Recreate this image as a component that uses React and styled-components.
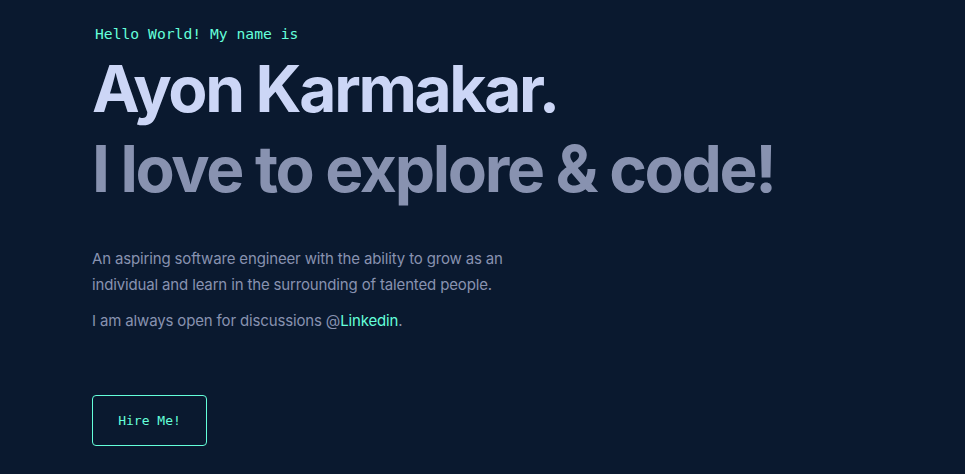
import React from "react";
import styled, { createGlobalStyle } from "styled-components";

const Global = createGlobalStyle`
  html, body { margin: 0; padding: 0; background: #0a192f; }
  body { font-family: Inter, "Liberation Sans", sans-serif; }
`;

const Hero = styled.section`
  min-height: 474px;
  box-sizing: border-box;
  padding: 24px 0 0 92px;
  display: flex;
  flex-direction: column;
  align-items: flex-start;
`;

const Greeting = styled.p`
  margin: 0 0 0 3px;
  font-family: "DejaVu Sans Mono", "Liberation Mono", monospace;
  font-size: 14.7px;
  line-height: 20px;
  color: #64ffda;
`;

const BigTitle = styled.h1`
  margin: ${p => p.$top}px 0 0 0;
  font-family: Inter, "Liberation Sans", sans-serif;
  font-weight: 650;
  font-size: 64px;
  line-height: 80px;
  letter-spacing: -2.3px;
  color: ${p => p.$color};
`;

const Text = styled.p`
  margin: ${p => p.$top}px 0 0 0;
  max-width: 440px;
  font-family: Inter, "Liberation Sans", sans-serif;
  font-size: 15px;
  letter-spacing: -0.15px;
  line-height: 26px;
  color: #8892b0;
`;

const Link = styled.a`
  color: #64ffda;
  text-decoration: none;
`;

const Button = styled.button`
  margin-top: 61px;
  width: 115px;
  height: 51px;
  background: transparent;
  border: 1px solid #64ffda;
  border-radius: 4px;
  color: #64ffda;
  font-family: "DejaVu Sans Mono", "Liberation Mono", monospace;
  font-size: 13px;
`;

export default function App() {
  return (
    <>
      <Global />
      <Hero>
        <Greeting>Hello World! My name is</Greeting>
        <BigTitle $top={5} $color="#ccd6f6">Ayon Karmakar.</BigTitle>
        <BigTitle $top={0} $color="#8892b0">I love to explore &amp; code!</BigTitle>
        <Text $top={37}>
          An aspiring software engineer with the ability to grow as an individual and learn in the surrounding of talented people.
        </Text>
        <Text $top={10}>
          I am always open for discussions @<Link href="#">Linkedin</Link>.
        </Text>
        <Button>Hire Me!</Button>
      </Hero>
    </>
  );
}
